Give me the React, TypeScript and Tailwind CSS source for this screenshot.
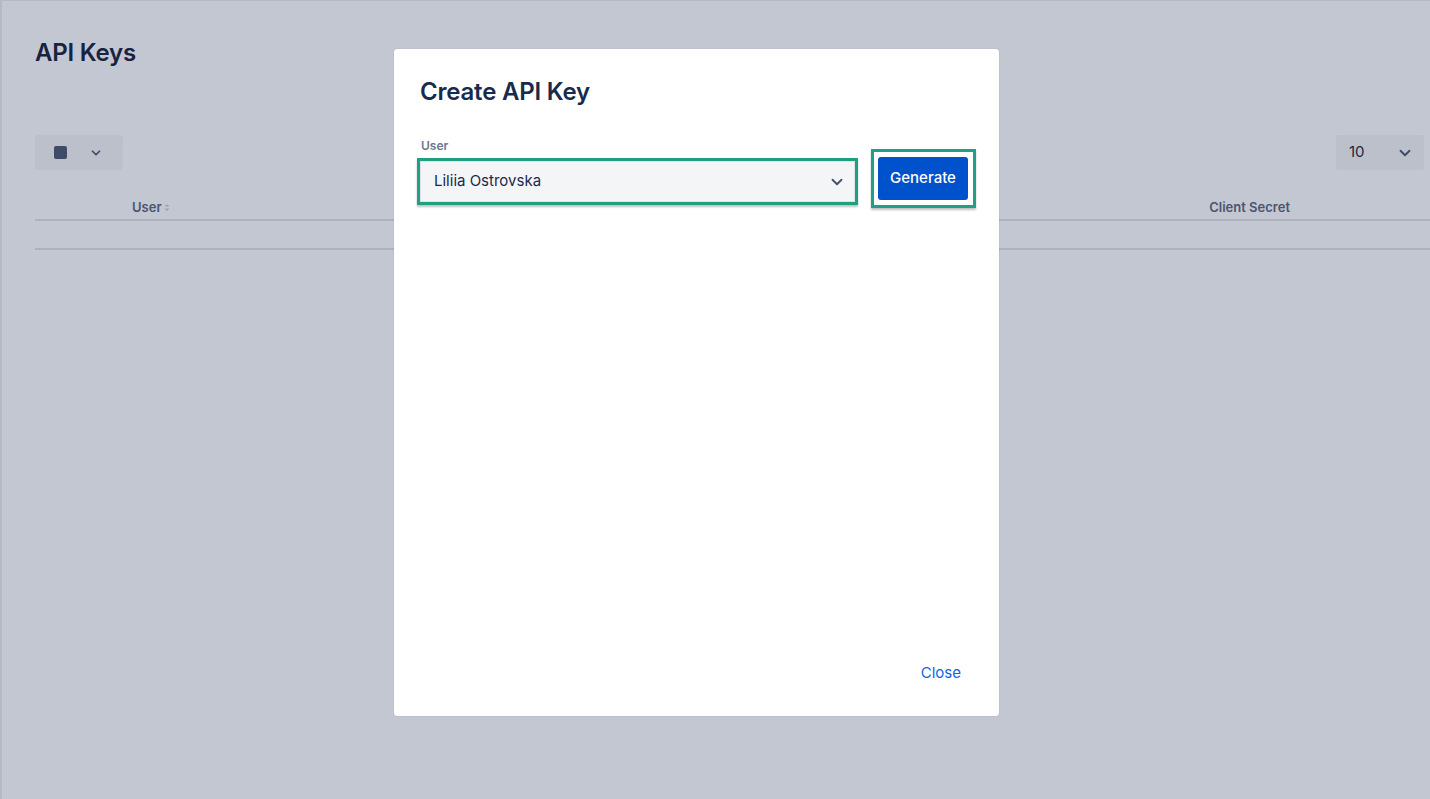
import { ChevronDown } from "lucide-react";

// Background page, already tinted by the modal's overlay
function ApiKeysPage(): React.ReactElement {
  return (
    <div className="h-full w-full border-l-2 border-t border-[#b5b9c5] bg-[#c3c7d1] pl-[33px] pt-[37px]">
      <h1 className="text-[24px] font-semibold leading-[30px] tracking-[-0.2px] text-[#172340]">API Keys</h1>

      <div className="mt-[67px] flex items-center justify-between">
        <button className="flex h-[35px] w-[88px] items-center gap-[22px] rounded-[3px] bg-[#bcc0cb] pl-[19px]">
          <span className="h-[13px] w-[13px] rounded-[2px] bg-[#3e4b69]" />
          <ChevronDown className="h-[14px] w-[14px] text-[#3e4b69]" strokeWidth={3} />
        </button>
        <button className="mr-[6px] flex h-[35px] w-[88px] items-center justify-between rounded-[3px] bg-[#bcc0cb] pl-[13px] pr-[10px]">
          <span className="text-[15px] text-[#1d2843]">10</span>
          <ChevronDown className="h-[18px] w-[18px] text-[#3e4b69]" strokeWidth={2.5} />
        </button>
      </div>

      {/* Table header */}
      <div className="mt-[26px] flex h-[25px] items-center border-b-2 border-[#adb1bc] text-[13px] font-semibold text-[#4a5572]">
        <span className="ml-[97px] flex items-center gap-[2px]">
          User
          <svg width="6" height="9" viewBox="0 0 6 9" className="text-[#9ea4b3]">
            <path d="M3 1 L5.5 3.5 H0.5 Z M3 8 L5.5 5.5 H0.5 Z" fill="currentColor" />
          </svg>
        </span>
        <span className="ml-auto mr-[140px]">Client Secret</span>
      </div>
      <div className="h-[29px] border-b-2 border-[#adb1bc]" />
    </div>
  );
}

function CreateApiKeyModal(): React.ReactElement {
  return (
    <div className="absolute left-[394px] top-[49px] flex h-[667px] w-[605px] flex-col rounded-[3px] bg-white px-[26px] pb-[32px] pt-[28px] shadow-[0_0_1px_rgba(9,30,66,0.3)]">
      <h2 className="text-[24px] font-semibold leading-[30px] tracking-[-0.2px] text-[#172b4d]">Create API Key</h2>

      <div className="mt-[30px] flex items-end">
        <div className="flex w-[438px] shrink-0 flex-col">
          <label className="mb-[3px] ml-[1px] text-[12px] font-semibold leading-[18px] text-[#6b778c]">User</label>
          {/* Highlighted select */}
          <div className="-ml-[3px] w-[441px] border-[3px] border-[#1fa083] shadow-[0_2px_2px_rgba(0,0,0,0.25)]">
            <div className="flex h-[41px] items-center justify-between border border-[#dfe1e6] bg-[#f4f5f7] pl-[13px] pr-[8px]">
              <span className="text-[15px] text-[#172b4d]">Liliia Ostrovska</span>
              <ChevronDown className="h-[18px] w-[18px] text-[#42526e]" strokeWidth={2.5} />
            </div>
          </div>
        </div>

        {/* Highlighted button */}
        <div className="-mb-[3px] ml-[13px] shrink-0 border-[3px] border-[#1fa083] bg-white py-[5px] pl-[4px] pr-[5px] shadow-[0_2px_2px_rgba(0,0,0,0.25)]">
          <button className="flex h-[43px] w-[90px] items-center justify-center rounded-[3px] bg-[#0052cc] text-[15px] font-medium text-white">
            Generate
          </button>
        </div>
      </div>

      <div className="flex-1" />
      <div className="flex justify-end">
        <button className="mr-[12px] text-[15px] text-[#0c66e4]">Close</button>
      </div>
    </div>
  );
}

export default function App(): React.ReactElement {
  return (
    <div
      className="relative h-[799px] w-[1430px] overflow-hidden"
      style={{ fontFamily: "Inter, 'Noto Sans', 'Liberation Sans', sans-serif" }}
    >
      <ApiKeysPage />
      <CreateApiKeyModal />
    </div>
  );
}
